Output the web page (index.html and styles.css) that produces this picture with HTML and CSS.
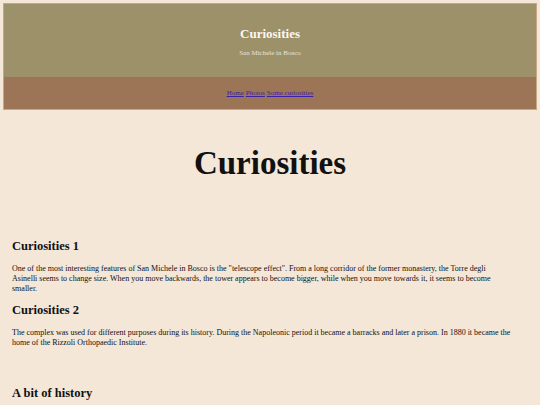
FILE: index.html
```html
<!DOCTYPE html>
<html lang="en">
<head>
<meta charset="utf-8">
<title>Curiosities</title>
<link rel="stylesheet" href="styles.css">
</head>
<body>
<header class="site-header">
  <div class="banner">
    <p class="site-title">Curiosities</p>
    <p class="site-subtitle">San Michele in Bosco</p>
  </div>
  <nav class="nav">
    <a href="#">Home</a> <a href="#">Photos</a> <a href="#">Some curiosities</a>
  </nav>
</header>
<main class="content">
  <h1 class="page-title">Curiosities</h1>
  <section class="section">
    <h2 class="section-title">Curiosities 1</h2>
    <p class="text">One of the most interesting features of San Michele in Bosco is the "telescope effect". From a long corridor of the former monastery, the Torre degli Asinelli seems to change size. When you move backwards, the tower appears to become bigger, while when you move towards it, it seems to become smaller.</p>
  </section>
  <section class="section">
    <h2 class="section-title">Curiosities 2</h2>
    <p class="text">The complex was used for different purposes during its history. During the Napoleonic period it became a barracks and later a prison. In 1880 it became the home of the Rizzoli Orthopaedic Institute.</p>
  </section>
  <section class="section history">
    <h2 class="section-title">A bit of history</h2>
  </section>
</main>
</body>
</html>
```

FILE: styles.css
```css
html, body {
  background: #f4e7d8;
}
body {
  margin: 3px;
  font-family: "Liberation Serif", "Times New Roman", serif;
  color: #111;
}
.site-header {
  border: 1px solid #c9a686;
}
.banner {
  background: #9d9169;
  height: 73px;
  display: flex;
  flex-direction: column;
  align-items: center;
  padding-top: 22px;
  box-sizing: border-box;
}
.site-title {
  margin: 0;
  font-size: 13px;
  line-height: 15px;
  font-weight: bold;
  color: #fbf7ee;
}
.site-subtitle {
  margin: 8px 0 0;
  font-size: 7px;
  line-height: 8px;
  color: #ece4d4;
}
.nav {
  background: #9c7556;
  height: 32px;
  display: flex;
  justify-content: center;
  align-items: center;
  gap: 2px;
  font-size: 7px;
}
.nav a {
  color: #3a22a8;
}
.content {
  padding: 0 25.5px 0 9px;
}
.page-title {
  margin: 34px 0 0;
  padding-left: 16.5px;
  text-align: center;
  font-size: 33px;
  line-height: 38px;
  font-weight: bold;
}
.section-title {
  margin: 0;
  font-size: 12.5px;
  line-height: 15px;
  font-weight: bold;
}
.section {
  margin-top: 57px;
}
.section + .section {
  margin-top: 8.5px;
}
.text {
  margin: 10px 0 0;
  font-size: 8px;
  line-height: 10px;
}
.section + .history {
  margin-top: 38px;
}
```
